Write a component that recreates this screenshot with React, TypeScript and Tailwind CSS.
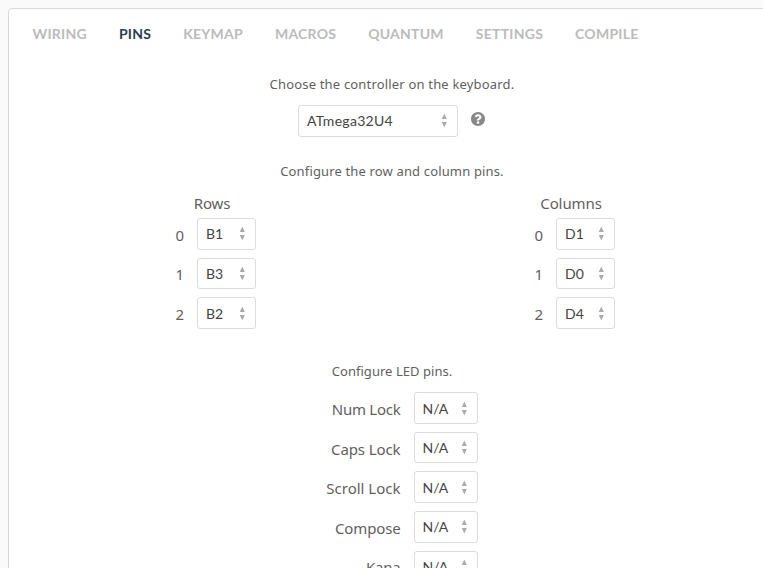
const sans = "font-['Noto_Sans',sans-serif]";
const lato = "font-['Lato',sans-serif]";

const tabs = ['WIRING', 'PINS', 'KEYMAP', 'MACROS', 'QUANTUM', 'SETTINGS', 'COMPILE'];

const leds = [
  { label: 'Num Lock', tracking: 'tracking-[-0.25px]' },
  { label: 'Caps Lock', tracking: 'tracking-[-0.1px]' },
  { label: 'Scroll Lock', tracking: 'tracking-normal' },
  { label: 'Compose', tracking: 'tracking-[-0.15px]' },
  { label: 'Kana', tracking: 'tracking-[-0.2px]' },
];

function Select({ value, width, tracking = '' }: { value: string; width: string; tracking?: string }) {
  return (
    <div
      className={`${width} ${lato} flex h-[31.6px] shrink-0 items-center justify-between rounded-[3px] border border-[#dcdcdc] bg-white pr-[10px] pl-2 text-[14px] leading-[20px] text-[#444]`}
    >
      <span className={`${tracking} pt-[1px]`}>{value}</span>
      <svg width="6" height="15" viewBox="0 0 6 15" fill="#aaa" className="shrink-0">
        <path d="M3.300 .5 5.800 6H.8zM3.300 14.500 .8 9h5z" />
      </svg>
    </div>
  );
}

function Field({ label, value, width, tracking = '' }: { label: string; value: string; width: string; tracking?: string }) {
  return (
    <div className="flex items-center">
      <span className={`${tracking} w-[92px] pt-[2px] pr-[13px] text-right text-[15px] leading-[20px] whitespace-nowrap`}>
        {label}
      </span>
      <Select value={value} width={width} />
    </div>
  );
}

function PinList({ title, pins, className }: { title: string; pins: string[]; className: string }) {
  return (
    <div className={className}>
      <div className="mb-[5px] ml-[47px] w-[120px] text-center text-[15px] leading-[20px] tracking-[-0.1px]">{title}</div>
      <div className="flex flex-col gap-[8px]">
        {pins.map((pin, i) => (
          <Field key={pin} label={String(i)} value={pin} width="w-[59px]" />
        ))}
      </div>
    </div>
  );
}

export default function App() {
  return (
    <div className="h-[568px] w-[763px] overflow-hidden bg-[#fafafa] pt-2 pl-2">
      <div className={`${sans} h-[600px] w-[800px] rounded-tl-[4px] border border-[#d9d9d9] bg-white text-[#5f5f5f]`}>
        <nav className={`${lato} flex gap-8 pt-[15px] pl-[23.5px] text-[14px] leading-[20px] font-bold tracking-[0.24px]`}>
          {tabs.map((tab) => (
            <span key={tab} className={tab === 'PINS' ? 'text-[#2c3e50]' : 'text-[#bbb]'}>
              {tab}
            </span>
          ))}
        </nav>
        <main className="flex w-[766px] flex-col items-center">
          <p className="mt-[30px] text-[13px] leading-[20px] tracking-[0.18px]">Choose the controller on the keyboard.</p>
          <div className="mt-[11px] mr-[2px] flex items-center">
            <Select value="ATmega32U4" width="w-[160px]" tracking="pl-[0.5px] tracking-[0.3px]" />
            <svg width="14" height="14" viewBox="8 8 496 496" fill="#888" className="mb-[3px] ml-[13px]">
              <path d="M504 256c0 137-111 248-248 248S8 393 8 256 119 8 256 8s248 111 248 248zM262.700 90c-54.500 0-89.300 23-116.500 63.800-3.500 5.300-2.400 12.400 2.700 16.300l34.700 26.300c5.200 3.900 12.600 3 16.700-2.100 17.900-22.700 30.100-35.800 57.300-35.800 20.400 0 45.700 13.100 45.700 33 0 15-12.400 22.700-32.500 34C247.100 238.500 216 254.900 216 296v4c0 6.600 5.400 12 12 12h56c6.600 0 12-5.400 12-12v-1.300c0-28.500 83.200-29.600 83.200-106.700 0-58-60.200-102-116.500-102zM256 338c-25.400 0-46 20.600-46 46s20.600 46 46 46 46-20.600 46-46-20.600-46-46-46z" />
            </svg>
          </div>
          <p className="mt-[24px] text-[13px] leading-[20px] tracking-[0.15px]">Configure the row and column pins.</p>
          <div className="mt-[12.5px] flex w-full pl-[96px]">
            <PinList title="Rows" pins={['B1', 'B3', 'B2']} className="w-[359px]" />
            <PinList title="Columns" pins={['D1', 'D0', 'D4']} className="w-[200px]" />
          </div>
          <p className="mt-[32.5px] text-[13px] leading-[20px] tracking-[0.04px]">Configure LED pins.</p>
          <div className="mt-[10.9px] ml-[15px] flex flex-col gap-[8px]">
            {leds.map(({ label, tracking }) => (
              <Field key={label} label={label} value="N/A" width="w-[64px]" tracking={tracking} />
            ))}
          </div>
        </main>
      </div>
    </div>
  );
}
